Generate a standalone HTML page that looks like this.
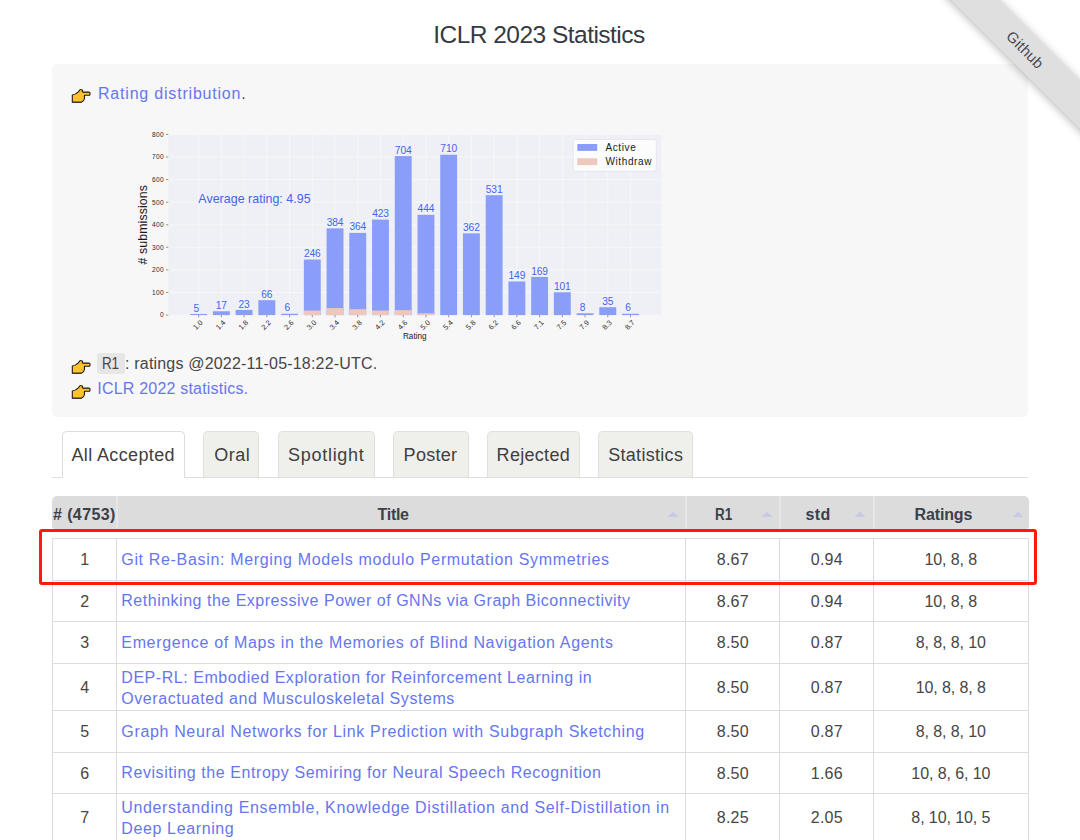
<!DOCTYPE html>
<html><head><meta charset="utf-8"><title>ICLR 2023 Statistics</title>
<style>
html,body{margin:0;padding:0;background:#fff;width:1080px;height:840px;overflow:hidden;position:relative;font-family:"Liberation Sans", sans-serif;}
.t{position:absolute;white-space:pre;font-family:"Liberation Sans", sans-serif;}
.r{position:absolute;}
</style></head><body>
<div class="t" style="left:433.20px;top:20.41px;font-size:24.5px;line-height:29.40px;color:#363a42;letter-spacing:-0.520px;">ICLR 2023 Statistics</div>
<div class="r" style="left:52px;top:64px;width:976px;height:353px;background:#f7f7f7;border-radius:5px;"></div>
<svg class="r" style="left:71px;top:88px" width="21" height="16" viewBox="0 0 21 16">
<path d="M1.3 7.0 Q4.6 6.6 7.4 3.9 L8.5 2.2 Q9.8 0.8 11.2 2.0 Q11.7 2.8 11.7 4.1 L17.9 4.1 Q19.1 4.2 19.1 5.7 Q19.1 7.26 17.9 7.26 L13.5 7.26 L13.4 10.6 Q13 13.2 10.3 14.3 L1.3 14.3 Z" fill="#fdc232" stroke="#151515" stroke-width="1.05" stroke-linejoin="round"/>
<path d="M9.6 2.2 Q10.6 2.6 10.8 4.2" stroke="#e79b12" stroke-width="1" fill="none"/>
<path d="M11.4 11.2 L13.1 11.2" stroke="#d89a20" stroke-width="0.7" fill="none"/><path d="M1.6 14.1 L10.3 14.1" stroke="#222" stroke-width="0.6" fill="none"/>
</svg>
<div class="t" style="left:98.00px;top:84.06px;font-size:16px;line-height:19.20px;color:#464646;letter-spacing:0.800px;"><span style="color:#6676f0">Rating distribution</span>.</div>
<svg class="r" style="left:71px;top:359px" width="21" height="16" viewBox="0 0 21 16">
<path d="M1.3 7.0 Q4.6 6.6 7.4 3.9 L8.5 2.2 Q9.8 0.8 11.2 2.0 Q11.7 2.8 11.7 4.1 L17.9 4.1 Q19.1 4.2 19.1 5.7 Q19.1 7.26 17.9 7.26 L13.5 7.26 L13.4 10.6 Q13 13.2 10.3 14.3 L1.3 14.3 Z" fill="#fdc232" stroke="#151515" stroke-width="1.05" stroke-linejoin="round"/>
<path d="M9.6 2.2 Q10.6 2.6 10.8 4.2" stroke="#e79b12" stroke-width="1" fill="none"/>
<path d="M11.4 11.2 L13.1 11.2" stroke="#d89a20" stroke-width="0.7" fill="none"/><path d="M1.6 14.1 L10.3 14.1" stroke="#222" stroke-width="0.6" fill="none"/>
</svg>
<div class="r" style="left:97px;top:352.5px;width:28px;height:21.5px;background:#e6e6e6;border-radius:3px;"></div>
<div class="t" style="left:102.00px;top:354.46px;font-size:16px;line-height:19.20px;color:#464646;letter-spacing:-0.200px;transform:scaleX(0.84);transform-origin:0 0;">R1</div>
<div class="t" style="left:125.00px;top:354.46px;font-size:16px;line-height:19.20px;color:#464646;letter-spacing:0.190px;">: ratings @2022-11-05-18:22-UTC.</div>
<svg class="r" style="left:71px;top:383.5px" width="21" height="16" viewBox="0 0 21 16">
<path d="M1.3 7.0 Q4.6 6.6 7.4 3.9 L8.5 2.2 Q9.8 0.8 11.2 2.0 Q11.7 2.8 11.7 4.1 L17.9 4.1 Q19.1 4.2 19.1 5.7 Q19.1 7.26 17.9 7.26 L13.5 7.26 L13.4 10.6 Q13 13.2 10.3 14.3 L1.3 14.3 Z" fill="#fdc232" stroke="#151515" stroke-width="1.05" stroke-linejoin="round"/>
<path d="M9.6 2.2 Q10.6 2.6 10.8 4.2" stroke="#e79b12" stroke-width="1" fill="none"/>
<path d="M11.4 11.2 L13.1 11.2" stroke="#d89a20" stroke-width="0.7" fill="none"/><path d="M1.6 14.1 L10.3 14.1" stroke="#222" stroke-width="0.6" fill="none"/>
</svg>
<div class="t" style="left:97.30px;top:378.96px;font-size:16px;line-height:19.20px;color:#6676f0;letter-spacing:0.200px;">ICLR 2022 statistics.</div>
<svg class="r" style="left:0;top:0" width="1080" height="840" viewBox="0 0 1080 840" font-family='"Liberation Sans", sans-serif'>
<rect x="168.3" y="134.4" width="492.90" height="180.70" fill="#eff0f5"/>
<line x1="168.3" x2="661.2" y1="315.10" y2="315.10" stroke="#f9f9fc" stroke-width="0.7"/>
<line x1="166.00" x2="168.30" y1="315.10" y2="315.10" stroke="#555" stroke-width="0.6"/>
<text x="164.00" y="317.45" font-size="6.6" fill="#2a2a2a" text-anchor="end" letter-spacing="0.35">0</text>
<line x1="168.3" x2="661.2" y1="292.51" y2="292.51" stroke="#f9f9fc" stroke-width="0.7"/>
<line x1="166.00" x2="168.30" y1="292.51" y2="292.51" stroke="#555" stroke-width="0.6"/>
<text x="164.00" y="294.86" font-size="6.6" fill="#2a2a2a" text-anchor="end" letter-spacing="0.35">100</text>
<line x1="168.3" x2="661.2" y1="269.93" y2="269.93" stroke="#f9f9fc" stroke-width="0.7"/>
<line x1="166.00" x2="168.30" y1="269.93" y2="269.93" stroke="#555" stroke-width="0.6"/>
<text x="164.00" y="272.28" font-size="6.6" fill="#2a2a2a" text-anchor="end" letter-spacing="0.35">200</text>
<line x1="168.3" x2="661.2" y1="247.34" y2="247.34" stroke="#f9f9fc" stroke-width="0.7"/>
<line x1="166.00" x2="168.30" y1="247.34" y2="247.34" stroke="#555" stroke-width="0.6"/>
<text x="164.00" y="249.69" font-size="6.6" fill="#2a2a2a" text-anchor="end" letter-spacing="0.35">300</text>
<line x1="168.3" x2="661.2" y1="224.75" y2="224.75" stroke="#f9f9fc" stroke-width="0.7"/>
<line x1="166.00" x2="168.30" y1="224.75" y2="224.75" stroke="#555" stroke-width="0.6"/>
<text x="164.00" y="227.10" font-size="6.6" fill="#2a2a2a" text-anchor="end" letter-spacing="0.35">400</text>
<line x1="168.3" x2="661.2" y1="202.16" y2="202.16" stroke="#f9f9fc" stroke-width="0.7"/>
<line x1="166.00" x2="168.30" y1="202.16" y2="202.16" stroke="#555" stroke-width="0.6"/>
<text x="164.00" y="204.51" font-size="6.6" fill="#2a2a2a" text-anchor="end" letter-spacing="0.35">500</text>
<line x1="168.3" x2="661.2" y1="179.58" y2="179.58" stroke="#f9f9fc" stroke-width="0.7"/>
<line x1="166.00" x2="168.30" y1="179.58" y2="179.58" stroke="#555" stroke-width="0.6"/>
<text x="164.00" y="181.93" font-size="6.6" fill="#2a2a2a" text-anchor="end" letter-spacing="0.35">600</text>
<line x1="168.3" x2="661.2" y1="156.99" y2="156.99" stroke="#f9f9fc" stroke-width="0.7"/>
<line x1="166.00" x2="168.30" y1="156.99" y2="156.99" stroke="#555" stroke-width="0.6"/>
<text x="164.00" y="159.34" font-size="6.6" fill="#2a2a2a" text-anchor="end" letter-spacing="0.35">700</text>
<line x1="168.3" x2="661.2" y1="134.40" y2="134.40" stroke="#f9f9fc" stroke-width="0.7"/>
<line x1="166.00" x2="168.30" y1="134.40" y2="134.40" stroke="#555" stroke-width="0.6"/>
<text x="164.00" y="136.75" font-size="6.6" fill="#2a2a2a" text-anchor="end" letter-spacing="0.35">800</text>
<line x1="198.65" x2="198.65" y1="134.4" y2="315.1" stroke="#f9f9fc" stroke-width="0.7"/>
<line x1="221.38" x2="221.38" y1="134.4" y2="315.1" stroke="#f9f9fc" stroke-width="0.7"/>
<line x1="244.11" x2="244.11" y1="134.4" y2="315.1" stroke="#f9f9fc" stroke-width="0.7"/>
<line x1="266.84" x2="266.84" y1="134.4" y2="315.1" stroke="#f9f9fc" stroke-width="0.7"/>
<line x1="289.57" x2="289.57" y1="134.4" y2="315.1" stroke="#f9f9fc" stroke-width="0.7"/>
<line x1="312.30" x2="312.30" y1="134.4" y2="315.1" stroke="#f9f9fc" stroke-width="0.7"/>
<line x1="335.03" x2="335.03" y1="134.4" y2="315.1" stroke="#f9f9fc" stroke-width="0.7"/>
<line x1="357.76" x2="357.76" y1="134.4" y2="315.1" stroke="#f9f9fc" stroke-width="0.7"/>
<line x1="380.49" x2="380.49" y1="134.4" y2="315.1" stroke="#f9f9fc" stroke-width="0.7"/>
<line x1="403.22" x2="403.22" y1="134.4" y2="315.1" stroke="#f9f9fc" stroke-width="0.7"/>
<line x1="425.95" x2="425.95" y1="134.4" y2="315.1" stroke="#f9f9fc" stroke-width="0.7"/>
<line x1="448.68" x2="448.68" y1="134.4" y2="315.1" stroke="#f9f9fc" stroke-width="0.7"/>
<line x1="471.41" x2="471.41" y1="134.4" y2="315.1" stroke="#f9f9fc" stroke-width="0.7"/>
<line x1="494.14" x2="494.14" y1="134.4" y2="315.1" stroke="#f9f9fc" stroke-width="0.7"/>
<line x1="516.87" x2="516.87" y1="134.4" y2="315.1" stroke="#f9f9fc" stroke-width="0.7"/>
<line x1="539.60" x2="539.60" y1="134.4" y2="315.1" stroke="#f9f9fc" stroke-width="0.7"/>
<line x1="562.33" x2="562.33" y1="134.4" y2="315.1" stroke="#f9f9fc" stroke-width="0.7"/>
<line x1="585.06" x2="585.06" y1="134.4" y2="315.1" stroke="#f9f9fc" stroke-width="0.7"/>
<line x1="607.79" x2="607.79" y1="134.4" y2="315.1" stroke="#f9f9fc" stroke-width="0.7"/>
<line x1="630.52" x2="630.52" y1="134.4" y2="315.1" stroke="#f9f9fc" stroke-width="0.7"/>
<rect x="190.20" y="313.97" width="16.9" height="1.13" fill="#8a9ef9"/>
<text x="196.25" y="311.57" font-size="10.2" fill="#4264ee" text-anchor="middle" letter-spacing="-0.1">5</text>
<line x1="198.65" x2="198.65" y1="315.1" y2="317.30" stroke="#555" stroke-width="0.6"/>
<text transform="translate(203.25,323.10) rotate(-45)" font-size="7.3" fill="#2a2a2a" text-anchor="end">1.0</text>
<rect x="212.93" y="311.26" width="16.9" height="3.84" fill="#8a9ef9"/>
<text x="221.38" y="308.86" font-size="10.2" fill="#4264ee" text-anchor="middle" letter-spacing="-0.1">17</text>
<line x1="221.38" x2="221.38" y1="315.1" y2="317.30" stroke="#555" stroke-width="0.6"/>
<text transform="translate(225.98,323.10) rotate(-45)" font-size="7.3" fill="#2a2a2a" text-anchor="end">1.4</text>
<rect x="235.66" y="309.90" width="16.9" height="5.20" fill="#8a9ef9"/>
<text x="244.11" y="307.50" font-size="10.2" fill="#4264ee" text-anchor="middle" letter-spacing="-0.1">23</text>
<line x1="244.11" x2="244.11" y1="315.1" y2="317.30" stroke="#555" stroke-width="0.6"/>
<text transform="translate(248.71,323.10) rotate(-45)" font-size="7.3" fill="#2a2a2a" text-anchor="end">1.8</text>
<rect x="258.39" y="300.19" width="16.9" height="14.91" fill="#8a9ef9"/>
<text x="266.84" y="297.79" font-size="10.2" fill="#4264ee" text-anchor="middle" letter-spacing="-0.1">66</text>
<line x1="266.84" x2="266.84" y1="315.1" y2="317.30" stroke="#555" stroke-width="0.6"/>
<text transform="translate(271.44,323.10) rotate(-45)" font-size="7.3" fill="#2a2a2a" text-anchor="end">2.2</text>
<rect x="281.12" y="313.74" width="16.9" height="1.36" fill="#8a9ef9"/>
<text x="287.17" y="311.34" font-size="10.2" fill="#4264ee" text-anchor="middle" letter-spacing="-0.1">6</text>
<line x1="289.57" x2="289.57" y1="315.1" y2="317.30" stroke="#555" stroke-width="0.6"/>
<text transform="translate(294.17,323.10) rotate(-45)" font-size="7.3" fill="#2a2a2a" text-anchor="end">2.6</text>
<rect x="303.85" y="259.53" width="16.9" height="55.57" fill="#8a9ef9"/>
<rect x="303.85" y="310.58" width="16.9" height="4.52" fill="#eec8bd"/>
<text x="312.30" y="257.13" font-size="10.2" fill="#4264ee" text-anchor="middle" letter-spacing="-0.1">246</text>
<line x1="312.30" x2="312.30" y1="315.1" y2="317.30" stroke="#555" stroke-width="0.6"/>
<text transform="translate(316.90,323.10) rotate(-45)" font-size="7.3" fill="#2a2a2a" text-anchor="end">3.0</text>
<rect x="326.58" y="228.36" width="16.9" height="86.74" fill="#8a9ef9"/>
<rect x="326.58" y="308.10" width="16.9" height="7.00" fill="#eec8bd"/>
<text x="335.03" y="225.96" font-size="10.2" fill="#4264ee" text-anchor="middle" letter-spacing="-0.1">384</text>
<line x1="335.03" x2="335.03" y1="315.1" y2="317.30" stroke="#555" stroke-width="0.6"/>
<text transform="translate(339.63,323.10) rotate(-45)" font-size="7.3" fill="#2a2a2a" text-anchor="end">3.4</text>
<rect x="349.31" y="232.88" width="16.9" height="82.22" fill="#8a9ef9"/>
<rect x="349.31" y="309.23" width="16.9" height="5.87" fill="#eec8bd"/>
<text x="357.76" y="230.48" font-size="10.2" fill="#4264ee" text-anchor="middle" letter-spacing="-0.1">364</text>
<line x1="357.76" x2="357.76" y1="315.1" y2="317.30" stroke="#555" stroke-width="0.6"/>
<text transform="translate(362.36,323.10) rotate(-45)" font-size="7.3" fill="#2a2a2a" text-anchor="end">3.8</text>
<rect x="372.04" y="219.55" width="16.9" height="95.55" fill="#8a9ef9"/>
<rect x="372.04" y="310.58" width="16.9" height="4.52" fill="#eec8bd"/>
<text x="380.49" y="217.15" font-size="10.2" fill="#4264ee" text-anchor="middle" letter-spacing="-0.1">423</text>
<line x1="380.49" x2="380.49" y1="315.1" y2="317.30" stroke="#555" stroke-width="0.6"/>
<text transform="translate(385.09,323.10) rotate(-45)" font-size="7.3" fill="#2a2a2a" text-anchor="end">4.2</text>
<rect x="394.77" y="156.08" width="16.9" height="159.02" fill="#8a9ef9"/>
<rect x="394.77" y="310.13" width="16.9" height="4.97" fill="#eec8bd"/>
<text x="403.22" y="153.68" font-size="10.2" fill="#4264ee" text-anchor="middle" letter-spacing="-0.1">704</text>
<line x1="403.22" x2="403.22" y1="315.1" y2="317.30" stroke="#555" stroke-width="0.6"/>
<text transform="translate(407.82,323.10) rotate(-45)" font-size="7.3" fill="#2a2a2a" text-anchor="end">4.6</text>
<rect x="417.50" y="214.81" width="16.9" height="100.29" fill="#8a9ef9"/>
<rect x="417.50" y="313.29" width="16.9" height="1.81" fill="#eec8bd"/>
<text x="425.95" y="212.41" font-size="10.2" fill="#4264ee" text-anchor="middle" letter-spacing="-0.1">444</text>
<line x1="425.95" x2="425.95" y1="315.1" y2="317.30" stroke="#555" stroke-width="0.6"/>
<text transform="translate(430.55,323.10) rotate(-45)" font-size="7.3" fill="#2a2a2a" text-anchor="end">5.0</text>
<rect x="440.23" y="154.73" width="16.9" height="160.37" fill="#8a9ef9"/>
<text x="448.68" y="152.33" font-size="10.2" fill="#4264ee" text-anchor="middle" letter-spacing="-0.1">710</text>
<line x1="448.68" x2="448.68" y1="315.1" y2="317.30" stroke="#555" stroke-width="0.6"/>
<text transform="translate(453.28,323.10) rotate(-45)" font-size="7.3" fill="#2a2a2a" text-anchor="end">5.4</text>
<rect x="462.96" y="233.33" width="16.9" height="81.77" fill="#8a9ef9"/>
<text x="471.41" y="230.93" font-size="10.2" fill="#4264ee" text-anchor="middle" letter-spacing="-0.1">362</text>
<line x1="471.41" x2="471.41" y1="315.1" y2="317.30" stroke="#555" stroke-width="0.6"/>
<text transform="translate(476.01,323.10) rotate(-45)" font-size="7.3" fill="#2a2a2a" text-anchor="end">5.8</text>
<rect x="485.69" y="195.16" width="16.9" height="119.94" fill="#8a9ef9"/>
<text x="494.14" y="192.76" font-size="10.2" fill="#4264ee" text-anchor="middle" letter-spacing="-0.1">531</text>
<line x1="494.14" x2="494.14" y1="315.1" y2="317.30" stroke="#555" stroke-width="0.6"/>
<text transform="translate(498.74,323.10) rotate(-45)" font-size="7.3" fill="#2a2a2a" text-anchor="end">6.2</text>
<rect x="508.42" y="281.44" width="16.9" height="33.66" fill="#8a9ef9"/>
<text x="516.87" y="279.04" font-size="10.2" fill="#4264ee" text-anchor="middle" letter-spacing="-0.1">149</text>
<line x1="516.87" x2="516.87" y1="315.1" y2="317.30" stroke="#555" stroke-width="0.6"/>
<text transform="translate(521.47,323.10) rotate(-45)" font-size="7.3" fill="#2a2a2a" text-anchor="end">6.6</text>
<rect x="531.15" y="276.93" width="16.9" height="38.17" fill="#8a9ef9"/>
<text x="539.60" y="274.53" font-size="10.2" fill="#4264ee" text-anchor="middle" letter-spacing="-0.1">169</text>
<line x1="539.60" x2="539.60" y1="315.1" y2="317.30" stroke="#555" stroke-width="0.6"/>
<text transform="translate(544.20,323.10) rotate(-45)" font-size="7.3" fill="#2a2a2a" text-anchor="end">7.1</text>
<rect x="553.88" y="292.29" width="16.9" height="22.81" fill="#8a9ef9"/>
<text x="562.33" y="289.89" font-size="10.2" fill="#4264ee" text-anchor="middle" letter-spacing="-0.1">101</text>
<line x1="562.33" x2="562.33" y1="315.1" y2="317.30" stroke="#555" stroke-width="0.6"/>
<text transform="translate(566.93,323.10) rotate(-45)" font-size="7.3" fill="#2a2a2a" text-anchor="end">7.5</text>
<rect x="576.61" y="313.29" width="16.9" height="1.81" fill="#8a9ef9"/>
<text x="582.66" y="310.89" font-size="10.2" fill="#4264ee" text-anchor="middle" letter-spacing="-0.1">8</text>
<line x1="585.06" x2="585.06" y1="315.1" y2="317.30" stroke="#555" stroke-width="0.6"/>
<text transform="translate(589.66,323.10) rotate(-45)" font-size="7.3" fill="#2a2a2a" text-anchor="end">7.9</text>
<rect x="599.34" y="307.19" width="16.9" height="7.91" fill="#8a9ef9"/>
<text x="607.79" y="304.79" font-size="10.2" fill="#4264ee" text-anchor="middle" letter-spacing="-0.1">35</text>
<line x1="607.79" x2="607.79" y1="315.1" y2="317.30" stroke="#555" stroke-width="0.6"/>
<text transform="translate(612.39,323.10) rotate(-45)" font-size="7.3" fill="#2a2a2a" text-anchor="end">8.3</text>
<rect x="622.07" y="313.74" width="16.9" height="1.36" fill="#8a9ef9"/>
<text x="628.12" y="311.34" font-size="10.2" fill="#4264ee" text-anchor="middle" letter-spacing="-0.1">6</text>
<line x1="630.52" x2="630.52" y1="315.1" y2="317.30" stroke="#555" stroke-width="0.6"/>
<text transform="translate(635.12,323.10) rotate(-45)" font-size="7.3" fill="#2a2a2a" text-anchor="end">8.7</text>
<text x="198.3" y="202.8" font-size="12.4" fill="#4264ee" letter-spacing="0.05">Average rating: 4.95</text>
<text transform="translate(147.2,224.7) rotate(-90)" font-size="12.3" fill="#1a1a1a" text-anchor="middle" letter-spacing="0.12">#  submissions</text>
<text x="414.8" y="338.8" font-size="8.2" fill="#1a1a1a" text-anchor="middle">Rating</text>
<rect x="573.3" y="139.5" width="83" height="31.8" rx="2" fill="#fcfcfd" stroke="#dedee4" stroke-width="0.6"/>
<rect x="577.3" y="144" width="19.9" height="6.9" fill="#8a9ef9"/>
<rect x="577.3" y="158.3" width="19.9" height="6.8" fill="#eec8bd"/>
<text x="605.5" y="151" font-size="10" fill="#1a1a1a" letter-spacing="0.6">Active</text>
<text x="605.5" y="165.2" font-size="10" fill="#1a1a1a" letter-spacing="0.6">Withdraw</text>
</svg>
<div class="r" style="left:52px;top:477px;width:976px;height:1px;background:#dedede;"></div>
<div class="r" style="left:62px;top:431px;width:123px;height:47px;background:#fff;border:1px solid #dcdcdc;border-bottom:none;border-radius:5px 5px 0 0;box-sizing:border-box;"></div>
<div class="t" style="left:71.40px;top:444.96px;font-size:18px;line-height:21.60px;color:#404040;letter-spacing:0.370px;">All Accepted</div>
<div class="r" style="left:203px;top:431px;width:56px;height:46px;background:#efefec;border:1px solid #e0e0dc;border-bottom:none;border-radius:5px 5px 0 0;box-sizing:border-box;"></div>
<div class="t" style="left:214.20px;top:444.96px;font-size:18px;line-height:21.60px;color:#404040;letter-spacing:0.500px;">Oral</div>
<div class="r" style="left:278px;top:431px;width:97px;height:46px;background:#efefec;border:1px solid #e0e0dc;border-bottom:none;border-radius:5px 5px 0 0;box-sizing:border-box;"></div>
<div class="t" style="left:288.00px;top:444.96px;font-size:18px;line-height:21.60px;color:#404040;letter-spacing:0.720px;">Spotlight</div>
<div class="r" style="left:393px;top:431px;width:76px;height:46px;background:#efefec;border:1px solid #e0e0dc;border-bottom:none;border-radius:5px 5px 0 0;box-sizing:border-box;"></div>
<div class="t" style="left:403.60px;top:444.96px;font-size:18px;line-height:21.60px;color:#404040;letter-spacing:0.300px;">Poster</div>
<div class="r" style="left:487px;top:431px;width:93px;height:46px;background:#efefec;border:1px solid #e0e0dc;border-bottom:none;border-radius:5px 5px 0 0;box-sizing:border-box;"></div>
<div class="t" style="left:496.60px;top:444.96px;font-size:18px;line-height:21.60px;color:#404040;letter-spacing:0.300px;">Rejected</div>
<div class="r" style="left:598px;top:431px;width:95px;height:46px;background:#efefec;border:1px solid #e0e0dc;border-bottom:none;border-radius:5px 5px 0 0;box-sizing:border-box;"></div>
<div class="t" style="left:608.20px;top:444.96px;font-size:18px;line-height:21.60px;color:#404040;letter-spacing:0.300px;">Statistics</div>
<div class="r" style="left:52px;top:496px;width:977px;height:33px;background:#dcdcdc;border-radius:5px 5px 3px 3px;"></div>
<div class="r" style="left:116px;top:496px;width:2px;height:33px;background:#e6e6e6;"></div>
<div class="r" style="left:685px;top:496px;width:2px;height:33px;background:#e6e6e6;"></div>
<div class="r" style="left:779px;top:496px;width:2px;height:33px;background:#e6e6e6;"></div>
<div class="r" style="left:873px;top:496px;width:2px;height:33px;background:#e6e6e6;"></div>
<div class="t" style="left:53.00px;top:504.86px;font-size:16px;line-height:19.20px;color:#3c4049;font-weight:bold;letter-spacing:0.400px;"># (4753)</div>
<div class="t" style="left:377.60px;top:504.86px;font-size:16px;line-height:19.20px;color:#3c4049;font-weight:bold;letter-spacing:-0.320px;">Title</div>
<div class="t" style="left:715.20px;top:504.86px;font-size:16px;line-height:19.20px;color:#3c4049;font-weight:bold;transform:scaleX(0.84);transform-origin:0 0;">R1</div>
<div class="t" style="left:805.60px;top:504.86px;font-size:16px;line-height:19.20px;color:#3c4049;font-weight:bold;letter-spacing:0.350px;">std</div>
<div class="t" style="left:914.60px;top:504.86px;font-size:16px;line-height:19.20px;color:#3c4049;font-weight:bold;letter-spacing:-0.150px;">Ratings</div>
<svg class="r" style="left:666.6px;top:510px" width="12" height="8" viewBox="0 0 12 8"><path d="M0.6 7 L6 1.5 L11.4 7 Z" fill="#c7cae7"/></svg>
<svg class="r" style="left:761px;top:510px" width="12" height="8" viewBox="0 0 12 8"><path d="M0.6 7 L6 1.5 L11.4 7 Z" fill="#c7cae7"/></svg>
<svg class="r" style="left:854.4px;top:510px" width="12" height="8" viewBox="0 0 12 8"><path d="M0.6 7 L6 1.5 L11.4 7 Z" fill="#c7cae7"/></svg>
<svg class="r" style="left:1011.5px;top:510px" width="12" height="8" viewBox="0 0 12 8"><path d="M0.6 7 L6 1.5 L11.4 7 Z" fill="#c7cae7"/></svg>
<div class="r" style="left:52px;top:538px;width:1px;height:302px;background:#dcdcdc;"></div>
<div class="r" style="left:1028px;top:538px;width:1px;height:302px;background:#dcdcdc;"></div>
<div class="r" style="left:116px;top:538px;width:1px;height:302px;background:#dcdcdc;"></div>
<div class="r" style="left:685px;top:538px;width:1px;height:302px;background:#dcdcdc;"></div>
<div class="r" style="left:779px;top:538px;width:1px;height:302px;background:#dcdcdc;"></div>
<div class="r" style="left:873px;top:538px;width:1px;height:302px;background:#dcdcdc;"></div>
<div class="r" style="left:52px;top:538px;width:977px;height:1px;background:#dcdcdc;"></div>
<div class="t" style="left:52.8px;width:64px;text-align:center;top:552.26px;font-size:16px;line-height:16px;color:#464646;letter-spacing:0.2px">1</div>
<div class="t" style="left:121.30px;top:549.66px;font-size:16px;line-height:19.20px;color:#6676f0;letter-spacing:0.664px;">Git Re-Basin: Merging Models modulo Permutation Symmetries</div>
<div class="t" style="left:685.8px;width:94px;text-align:center;top:552.26px;font-size:16px;line-height:16px;color:#464646;letter-spacing:0.2px">8.67</div>
<div class="t" style="left:779.8px;width:94px;text-align:center;top:552.26px;font-size:16px;line-height:16px;color:#464646;letter-spacing:0.2px">0.94</div>
<div class="t" style="left:873.3px;width:155.0px;text-align:center;top:552.26px;font-size:16px;line-height:16px;color:#464646;letter-spacing:-0.1px">10, 8, 8</div>
<div class="r" style="left:52px;top:580px;width:977px;height:1px;background:#dcdcdc;"></div>
<div class="t" style="left:52.8px;width:64px;text-align:center;top:593.76px;font-size:16px;line-height:16px;color:#464646;letter-spacing:0.2px">2</div>
<div class="t" style="left:121.30px;top:591.16px;font-size:16px;line-height:19.20px;color:#6676f0;letter-spacing:0.509px;">Rethinking the Expressive Power of GNNs via Graph Biconnectivity</div>
<div class="t" style="left:685.8px;width:94px;text-align:center;top:593.76px;font-size:16px;line-height:16px;color:#464646;letter-spacing:0.2px">8.67</div>
<div class="t" style="left:779.8px;width:94px;text-align:center;top:593.76px;font-size:16px;line-height:16px;color:#464646;letter-spacing:0.2px">0.94</div>
<div class="t" style="left:873.3px;width:155.0px;text-align:center;top:593.76px;font-size:16px;line-height:16px;color:#464646;letter-spacing:-0.1px">10, 8, 8</div>
<div class="r" style="left:52px;top:621px;width:977px;height:1px;background:#dcdcdc;"></div>
<div class="t" style="left:52.8px;width:64px;text-align:center;top:635.26px;font-size:16px;line-height:16px;color:#464646;letter-spacing:0.2px">3</div>
<div class="t" style="left:121.30px;top:632.66px;font-size:16px;line-height:19.20px;color:#6676f0;letter-spacing:0.660px;">Emergence of Maps in the Memories of Blind Navigation Agents</div>
<div class="t" style="left:685.8px;width:94px;text-align:center;top:635.26px;font-size:16px;line-height:16px;color:#464646;letter-spacing:0.2px">8.50</div>
<div class="t" style="left:779.8px;width:94px;text-align:center;top:635.26px;font-size:16px;line-height:16px;color:#464646;letter-spacing:0.2px">0.87</div>
<div class="t" style="left:873.3px;width:155.0px;text-align:center;top:635.26px;font-size:16px;line-height:16px;color:#464646;letter-spacing:-0.1px">8, 8, 8, 10</div>
<div class="r" style="left:52px;top:663px;width:977px;height:1px;background:#dcdcdc;"></div>
<div class="t" style="left:52.8px;width:64px;text-align:center;top:679.76px;font-size:16px;line-height:16px;color:#464646;letter-spacing:0.2px">4</div>
<div class="t" style="left:121.30px;top:667.66px;font-size:16px;line-height:19.20px;color:#6676f0;letter-spacing:0.546px;">DEP-RL: Embodied Exploration for Reinforcement Learning in</div>
<div class="t" style="left:121.30px;top:689.06px;font-size:16px;line-height:19.20px;color:#6676f0;letter-spacing:0.558px;">Overactuated and Musculoskeletal Systems</div>
<div class="t" style="left:685.8px;width:94px;text-align:center;top:679.76px;font-size:16px;line-height:16px;color:#464646;letter-spacing:0.2px">8.50</div>
<div class="t" style="left:779.8px;width:94px;text-align:center;top:679.76px;font-size:16px;line-height:16px;color:#464646;letter-spacing:0.2px">0.87</div>
<div class="t" style="left:873.3px;width:155.0px;text-align:center;top:679.76px;font-size:16px;line-height:16px;color:#464646;letter-spacing:-0.1px">10, 8, 8, 8</div>
<div class="r" style="left:52px;top:710px;width:977px;height:1px;background:#dcdcdc;"></div>
<div class="t" style="left:52.8px;width:64px;text-align:center;top:724.26px;font-size:16px;line-height:16px;color:#464646;letter-spacing:0.2px">5</div>
<div class="t" style="left:121.30px;top:721.66px;font-size:16px;line-height:19.20px;color:#6676f0;letter-spacing:0.653px;">Graph Neural Networks for Link Prediction with Subgraph Sketching</div>
<div class="t" style="left:685.8px;width:94px;text-align:center;top:724.26px;font-size:16px;line-height:16px;color:#464646;letter-spacing:0.2px">8.50</div>
<div class="t" style="left:779.8px;width:94px;text-align:center;top:724.26px;font-size:16px;line-height:16px;color:#464646;letter-spacing:0.2px">0.87</div>
<div class="t" style="left:873.3px;width:155.0px;text-align:center;top:724.26px;font-size:16px;line-height:16px;color:#464646;letter-spacing:-0.1px">8, 8, 8, 10</div>
<div class="r" style="left:52px;top:752px;width:977px;height:1px;background:#dcdcdc;"></div>
<div class="t" style="left:52.8px;width:64px;text-align:center;top:765.76px;font-size:16px;line-height:16px;color:#464646;letter-spacing:0.2px">6</div>
<div class="t" style="left:121.30px;top:763.16px;font-size:16px;line-height:19.20px;color:#6676f0;letter-spacing:0.567px;">Revisiting the Entropy Semiring for Neural Speech Recognition</div>
<div class="t" style="left:685.8px;width:94px;text-align:center;top:765.76px;font-size:16px;line-height:16px;color:#464646;letter-spacing:0.2px">8.50</div>
<div class="t" style="left:779.8px;width:94px;text-align:center;top:765.76px;font-size:16px;line-height:16px;color:#464646;letter-spacing:0.2px">1.66</div>
<div class="t" style="left:873.3px;width:155.0px;text-align:center;top:765.76px;font-size:16px;line-height:16px;color:#464646;letter-spacing:-0.1px">10, 8, 6, 10</div>
<div class="r" style="left:52px;top:793px;width:977px;height:1px;background:#dcdcdc;"></div>
<div class="t" style="left:52.8px;width:64px;text-align:center;top:810.01px;font-size:16px;line-height:16px;color:#464646;letter-spacing:0.2px">7</div>
<div class="t" style="left:121.30px;top:797.91px;font-size:16px;line-height:19.20px;color:#6676f0;letter-spacing:0.636px;">Understanding Ensemble, Knowledge Distillation and Self-Distillation in</div>
<div class="t" style="left:121.30px;top:819.31px;font-size:16px;line-height:19.20px;color:#6676f0;letter-spacing:0.625px;">Deep Learning</div>
<div class="t" style="left:685.8px;width:94px;text-align:center;top:810.01px;font-size:16px;line-height:16px;color:#464646;letter-spacing:0.2px">8.25</div>
<div class="t" style="left:779.8px;width:94px;text-align:center;top:810.01px;font-size:16px;line-height:16px;color:#464646;letter-spacing:0.2px">2.05</div>
<div class="t" style="left:873.3px;width:155.0px;text-align:center;top:810.01px;font-size:16px;line-height:16px;color:#464646;letter-spacing:-0.1px">8, 10, 10, 5</div>
<div class="r" style="left:38.5px;top:529px;width:998.0px;height:56px;border:3px solid #ff1a0a;border-radius:3px;box-sizing:border-box;"></div>
<div class="r" style="left:894px;top:32px;width:260px;height:34px;background:#dfdfdf;transform:rotate(45deg);transform-origin:130px 17px;box-shadow:0 1px 9px rgba(0,0,0,0.30);"></div>
<div class="t" style="left:894.6px;top:32.8px;width:260px;height:34px;line-height:34px;text-align:center;font-size:15px;color:#4a4a52;letter-spacing:0.3px;transform:rotate(45deg);transform-origin:130px 17px;">Github</div>
</body></html>
